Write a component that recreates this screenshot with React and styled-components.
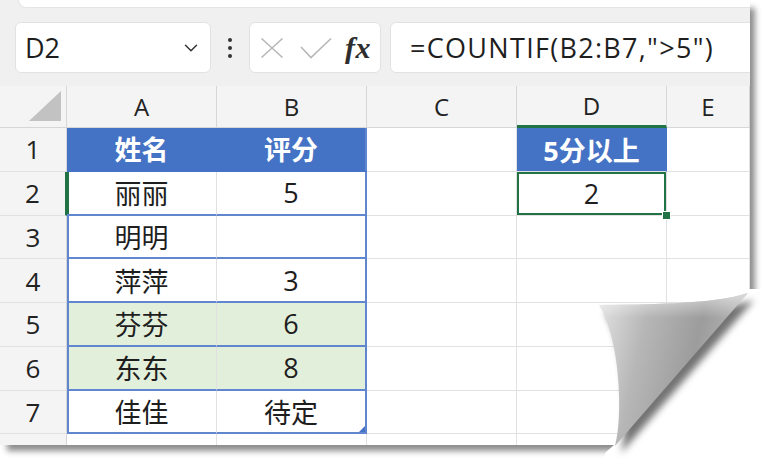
import React from 'react';
import styled, { createGlobalStyle, css } from 'styled-components';
import { ChevronDown } from 'lucide-react';

const BLUE = '#4472c4';
const LINE_BLUE = '#5f86cf';
const GREEN = '#217346';
const GRID = '#e1e1e1';
const HEAD_LINE = '#d6d6d6';

const GlobalStyle = createGlobalStyle`
  html, body {
    margin: 0;
    padding: 0;
    background: #ffffff;
  }
  body {
    font-family: "Open Sans", "Noto Sans CJK SC", sans-serif;
    color: #222222;
  }
`;

const Frame = styled.div`
  position: relative;
  width: 773px;
  height: 470px;
`;

const Page = styled.div`
  display: flex;
  flex-direction: column;
  width: 750px;
  height: 445px;
  overflow: hidden;
  background: #ffffff;
  box-shadow: 6px 7px 6px -1px rgba(0, 0, 0, 0.45);
`;

const Toolbar = styled.div`
  display: flex;
  flex-direction: column;
  flex: 0 0 86px;
  overflow: hidden;
  background: #f0f0f0;
`;

const RibbonEdge = styled.div`
  height: 7px;
  margin-left: 18px;
  background: #ffffff;
  border-left: 1px solid #e4e4e4;
  border-bottom: 1px solid #e4e4e4;
  border-bottom-left-radius: 9px;
`;

const Bar = styled.div`
  display: flex;
  align-items: center;
  height: 51px;
  margin-top: 14px;
  padding-left: 15px;
`;

const Box = styled.div`
  box-sizing: border-box;
  display: flex;
  align-items: center;
  height: 51px;
  background: #ffffff;
  border: 1px solid #e2e2e2;
  border-radius: 6px;
`;

const NameBox = styled(Box)`
  width: 196px;
  justify-content: space-between;
  padding: 0 8px 0 9px;
  font-size: 27px;
  color: #1e1e1e;
`;

const Kebab = styled.div`
  display: flex;
  flex-direction: column;
  align-items: center;
  justify-content: center;
  gap: 4px;
  width: 38px;
`;

const Dot = styled.span`
  width: 4px;
  height: 4px;
  border-radius: 50%;
  background: #333333;
`;

const FuncBox = styled(Box)`
  width: 132px;
  gap: 16px;
  padding-left: 10px;
`;

const Fx = styled.span`
  font-family: "Liberation Serif", serif;
  font-style: italic;
  font-weight: 700;
  font-size: 30px;
  color: #2e2e2e;
  margin-left: -3px;
  letter-spacing: 0.5px;
`;

const FormulaBox = styled(Box)`
  flex: 1;
  margin-left: 9px;
  margin-right: -12px;
  padding-left: 19px;
  font-size: 27px;
  letter-spacing: 1.3px;
  color: #1e1e1e;
  white-space: nowrap;
`;

const Sheet = styled.div`
  flex: 1;
  display: grid;
  grid-template-columns: 67px 150px 150px 150px 150px 1fr;
  grid-template-rows: 42px repeat(8, 43.75px);
`;

const Corner = styled.div`
  display: flex;
  align-items: flex-end;
  justify-content: flex-end;
  padding: 0 5px 6px 0;
  background: #f4f4f4;
  border-right: 1px solid ${HEAD_LINE};
  border-bottom: 1px solid ${HEAD_LINE};
`;

const ColHead = styled.div`
  display: flex;
  align-items: center;
  justify-content: center;
  background: #f4f4f4;
  font-size: 24px;
  color: #222222;
  border-right: 1px solid ${HEAD_LINE};
  border-bottom: ${(p) => (p.$active ? `3px solid ${GREEN}` : `1px solid ${HEAD_LINE}`)};
`;

const RowHead = styled.div`
  display: flex;
  align-items: center;
  justify-content: center;
  background: #f4f4f4;
  font-size: 26px;
  color: #222222;
  border-bottom: 1px solid ${GRID};
  border-right: ${(p) => (p.$active ? `2px solid ${GREEN}` : `1px solid ${HEAD_LINE}`)};
`;

const Cell = styled.div`
  position: relative;
  display: flex;
  align-items: center;
  justify-content: center;
  font-size: 27px;
  background: ${(p) => p.$fill || '#ffffff'};
  color: ${(p) => (p.$head ? '#ffffff' : '#1e1e1e')};
  font-weight: ${(p) => (p.$head ? 700 : 400)};
  border-right: 1px solid ${(p) => (p.$head ? BLUE : GRID)};
  border-bottom: 1px solid ${GRID};

  ${(p) => p.$table && css`
    border-bottom: 2px solid ${p.$head ? BLUE : LINE_BLUE};
  `}
  ${(p) => p.$side === 'left' && css`
    box-shadow: inset 2px 0 0 ${p.$edgeColor || LINE_BLUE};
  `}
  ${(p) => p.$side === 'right' && css`
    border-right: 2px solid ${LINE_BLUE};
  `}
  ${(p) => p.$handle && css`
    &::after {
      content: '';
      position: absolute;
      right: 0;
      bottom: 0;
      border-style: solid;
      border-width: 0 0 6px 6px;
      border-color: transparent transparent ${BLUE} transparent;
    }
  `}
  ${(p) => p.$selected && css`
    z-index: 2;
    box-shadow: inset 0 0 0 2px ${GREEN};
    &::after {
      content: '';
      position: absolute;
      right: -5px;
      bottom: -5px;
      width: 7px;
      height: 7px;
      background: ${GREEN};
      border: 1px solid #ffffff;
    }
  `}
`;

const Curl = styled.svg`
  position: absolute;
  left: 0;
  top: 0;
  pointer-events: none;
`;

const CrossIcon = () => (
  <svg width="24" height="22" viewBox="0 0 24 22">
    <path d="M1.5 1.5 L22.5 20.5 M22.5 1.5 L1.5 20.5" stroke="#b8b8b8" strokeWidth="1.6" fill="none" />
  </svg>
);

const CheckIcon = () => (
  <svg width="32" height="22" viewBox="0 0 32 22">
    <path d="M1 10 L11 20.5 L31 1.5" stroke="#b8b8b8" strokeWidth="1.6" fill="none" />
  </svg>
);

const CornerMark = () => (
  <svg width="32" height="30" viewBox="0 0 32 30">
    <polygon points="32,0 32,30 0,30" fill="#c2c2c2" />
  </svg>
);

const COLS = ['A', 'B', 'C', 'D', 'E'];

const ROWS = [
  { a: '姓名', b: '评分', d: '5分以上', head: true },
  { a: '丽丽', b: '5', d: '2', active: true },
  { a: '明明', b: '' },
  { a: '萍萍', b: '3' },
  { a: '芬芬', b: '6', band: true },
  { a: '东东', b: '8', band: true },
  { a: '佳佳', b: '待定', last: true },
  null,
];

const CURL = 'M599 305 C640 304 712 305 748 293 L615 446 C623 420 621 340 599 305 Z';

const DataRow = ({ row, index }) => {
  const n = index + 1;
  if (!row) {
    // row 8 is only a sliver at the page edge, its number is not visible
    return (
      <>
        <RowHead />
        <Cell />
        <Cell />
        <Cell />
        <Cell />
        <Cell />
      </>
    );
  }
  const fill = row.head ? BLUE : row.band ? '#e2efda' : null;
  return (
    <>
      <RowHead $active={row.active}>{n}</RowHead>
      <Cell
        $table
        $head={row.head}
        $fill={fill}
        $side="left"
        $edgeColor={row.active ? GREEN : row.head ? BLUE : LINE_BLUE}
      >
        {row.a}
      </Cell>
      <Cell $table $head={row.head} $fill={fill} $side="right" $handle={row.last}>
        {row.b}
      </Cell>
      <Cell />
      {row.d ? (
        <Cell $head={row.head} $fill={row.head ? BLUE : null} $selected={row.active}>
          {row.d}
        </Cell>
      ) : (
        <Cell />
      )}
      <Cell />
    </>
  );
};

const App = () => (
  <>
    <GlobalStyle />
    <Frame>
      <Page>
        <Toolbar>
          <RibbonEdge />
          <Bar>
            <NameBox>
              <span>D2</span>
              <ChevronDown size={22} strokeWidth={1.6} color="#333" />
            </NameBox>
            <Kebab>
              <Dot />
              <Dot />
              <Dot />
            </Kebab>
            <FuncBox>
              <CrossIcon />
              <CheckIcon />
              <Fx>fx</Fx>
            </FuncBox>
            <FormulaBox>=COUNTIF(B2:B7,"&gt;5")</FormulaBox>
          </Bar>
        </Toolbar>

        <Sheet>
          <Corner>
            <CornerMark />
          </Corner>
          {COLS.map((c) => (
            <ColHead key={c} $active={c === 'D'}>
              {c}
            </ColHead>
          ))}
          {ROWS.map((row, i) => (
            <DataRow key={i} row={row} index={i} />
          ))}
        </Sheet>
      </Page>

      <Curl width="773" height="470" viewBox="0 0 773 470">
        <defs>
          <filter id="curlShadow" x="-20%" y="-20%" width="140%" height="140%">
            <feGaussianBlur stdDeviation="3.5" />
          </filter>
          <linearGradient id="curlFill" x1="600" y1="300" x2="735" y2="330" gradientUnits="userSpaceOnUse">
            <stop offset="0" stopColor="#e2e2e2" />
            <stop offset="0.35" stopColor="#b7b7b7" />
            <stop offset="0.75" stopColor="#9c9c9c" />
            <stop offset="1" stopColor="#b2b2b2" />
          </linearGradient>
          <linearGradient id="curlShine" x1="0" y1="298" x2="0" y2="318" gradientUnits="userSpaceOnUse">
            <stop offset="0" stopColor="#ffffff" stopOpacity="0.45" />
            <stop offset="1" stopColor="#ffffff" stopOpacity="0" />
          </linearGradient>
        </defs>
        <path d="M749 289 L773 289 L773 470 L598 470 L606 452 L614 445 Z" fill="#ffffff" />
        <path d={CURL} transform="translate(6 7)" fill="rgba(0,0,0,0.55)" filter="url(#curlShadow)" />
        <path d={CURL} fill="url(#curlFill)" />
        <path d={CURL} fill="url(#curlShine)" />
      </Curl>
    </Frame>
  </>
);

export default App;
